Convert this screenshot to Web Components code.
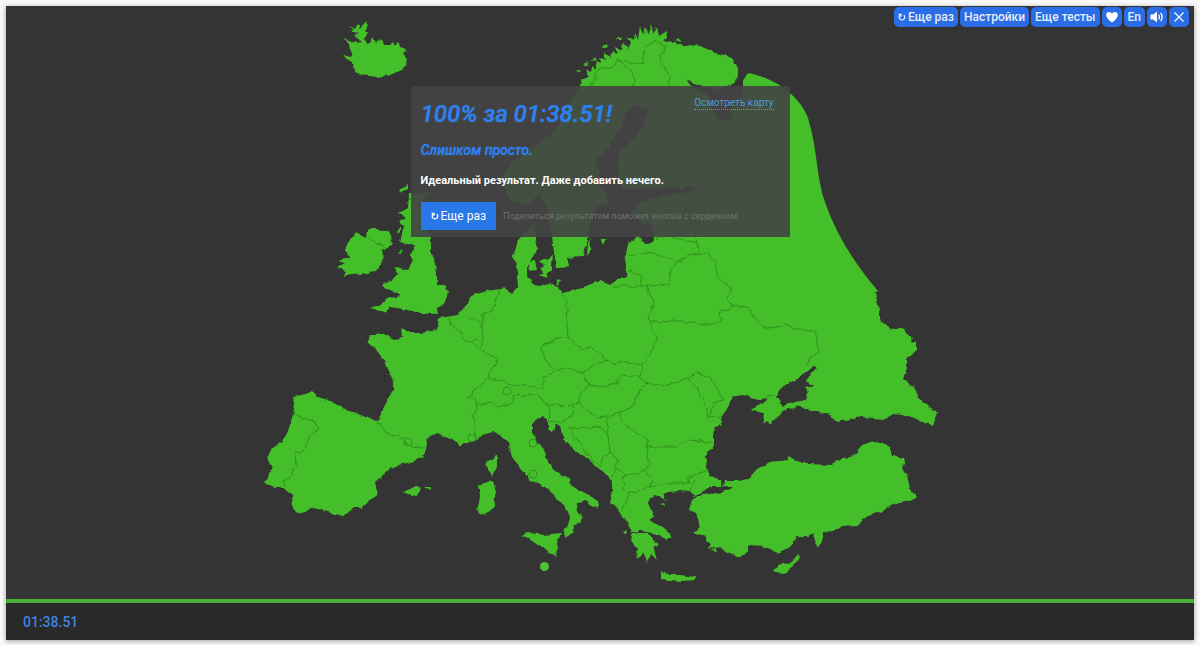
<!DOCTYPE html>
<html lang="ru">
<head>
<meta charset="utf-8">
<title>Карта Европы</title>
<style>
    body {
        margin: 0;
        background: #fafafa;
        font-family: Roboto, "Liberation Sans", sans-serif;
    }
</style>
</head>
<body>
<quiz-app>
    <quiz-toolbar slot="toolbar"></quiz-toolbar>
    <europe-map slot="map"></europe-map>
    <result-card slot="result" score="100%" time="01:38.51">
        <span slot="verdict">Слишком просто.</span>
        <span slot="comment">Идеальный результат. Даже добавить нечего.</span>
        <span slot="hint">Поделиться результатом поможет кнопка с сердечком</span>
    </result-card>
    <quiz-timer slot="status">01:38.51</quiz-timer>
</quiz-app>

<script>
class QuizApp extends HTMLElement {
    constructor() {
        super();
        this.attachShadow({ mode: "open" });
        this.shadowRoot.innerHTML = `
<style>
    :host {
        display: flex;
        box-sizing: border-box;
        min-height: 100vh;
        padding: 6px 6px 5px;
    }

    .frame {
        flex: 1;
        display: flex;
        flex-direction: column;
        background: #343434;
        box-shadow: 0 1px 5px rgba(0, 0, 0, 0.4);
    }

    main {
        flex: 1;
        display: grid;
        grid-template: minmax(0, 1fr) / minmax(0, 1fr);
    }

    slot[name="map"]::slotted(*),
    slot[name="toolbar"]::slotted(*),
    slot[name="result"]::slotted(*) {
        grid-area: 1 / 1;
    }

    slot[name="toolbar"]::slotted(*) {
        place-self: start end;
        margin: 1px 5px;
        z-index: 1;
    }

    slot[name="result"]::slotted(*) {
        place-self: start center;
        margin-top: 80px;
    }

    .progress {
        height: 4px;
        background: #4caf35;
    }

    footer {
        display: flex;
        align-items: center;
        height: 37px;
        padding: 0 17px;
        background: #292929;
    }
</style>
<div class="frame">
    <main>
        <slot name="map"></slot>
        <slot name="toolbar"></slot>
        <slot name="result"></slot>
    </main>
    <div class="progress"></div>
    <footer><slot name="status"></slot></footer>
</div>`;
    }
}

class QuizToolbar extends HTMLElement {
    constructor() {
        super();
        this.attachShadow({ mode: "open" });
        this.shadowRoot.innerHTML = `
<style>
    :host {
        display: flex;
        gap: 2px;
    }

    button {
        display: flex;
        align-items: center;
        justify-content: center;
        gap: 2px;
        height: 20px;
        min-width: 20px;
        padding: 0 4px;
        border: 0;
        border-radius: 5px;
        background: #2a6de6;
        color: #e6eefc;
        font: 500 12px Roboto, "Liberation Sans", sans-serif;
        cursor: pointer;
    }

    button.icon {
        padding: 0 3px;
    }

    svg {
        display: block;
        width: 14px;
        height: 14px;
    }

    svg.reload {
        width: 8px;
        height: 8px;
    }
</style>
<button type="button"><svg class="reload" viewBox="0 0 9 9" fill="none" stroke="#e6eefc" stroke-width="1.500"><path d="M2.600 2.200A3.100 3.100 0 1 0 6.600 2.400"/><path d="M0.600 1.600H3.300V4.200"/></svg>Еще раз</button>
<button type="button">Настройки</button>
<button type="button">Еще тесты</button>
<button type="button" class="icon" aria-label="Нравится"><svg viewBox="0 0 14 14" fill="#fff"><path d="M7 12.600C3 9.600 1.200 7.600 1.200 5.100A3 3 0 0 1 4.200 2C5.500 2 6.500 2.700 7 3.800C7.500 2.700 8.500 2 9.800 2A3 3 0 0 1 12.800 5.100C12.800 7.600 11 9.600 7 12.600Z"/></svg></button>
<button type="button">En</button>
<button type="button" class="icon" aria-label="Звук"><svg viewBox="0 0 14 14"><path d="M0.500 4.600H3.200L7 1.600V12.400L3.200 9.400H0.500Z" fill="#fff"/><path d="M8.600 4.600Q10.400 7 8.600 9.400M10.600 2.800Q13.800 7 10.600 11.200" fill="none" stroke="#fff" stroke-width="1.300"/></svg></button>
<button type="button" class="icon" aria-label="Закрыть"><svg viewBox="0 0 14 14"><path d="M2.500 2.500L11.500 11.500M11.500 2.500L2.500 11.500" stroke="#fff" stroke-width="1.200"/></svg></button>`;
    }
}

class ResultCard extends HTMLElement {
    constructor() {
        super();
        this.attachShadow({ mode: "open" });
        this.shadowRoot.innerHTML = `
<style>
    :host {
        display: block;
        box-sizing: border-box;
        width: 379px;
        max-width: 100%;
        padding: 10px 16px 7px 10px;
        background: rgba(68, 68, 68, 0.9);
        color: #fff;
    }

    header {
        display: flex;
        justify-content: space-between;
        align-items: flex-start;
    }

    h1, h2, p {
        margin: 0;
    }

    h1 {
        color: #2f80ed;
        font-size: 24px;
        font-style: italic;
        font-weight: 500;
        line-height: 36px;
        text-shadow: 0 0 1px;
    }

    h2 {
        margin-top: 10px;
        color: #2f80ed;
        font-size: 14px;
        font-style: italic;
        font-weight: 500;
        line-height: 16px;
        text-shadow: 0 0 1px;
    }

    p {
        margin-top: 15px;
        font-size: 11px;
        font-weight: bold;
        line-height: 16px;
    }

    a {
        margin-top: 1px;
        border-bottom: 1px dotted #4b98dc;
        color: #4b98dc;
        font-size: 10px;
        line-height: 12px;
        text-decoration: none;
    }

    .actions {
        display: flex;
        align-items: center;
        gap: 7px;
        margin-top: 13px;
    }

    button {
        display: flex;
        align-items: center;
        gap: 2px;
        height: 28px;
        padding: 0 10px;
        border: 0;
        background: #2878e8;
        color: #fff;
        font: 12px Roboto, "Liberation Sans", sans-serif;
        cursor: pointer;
    }

    svg {
        width: 8px;
        height: 8px;
    }

    small {
        color: #6e716d;
        font-size: 9px;
    }
</style>
<header>
    <h1></h1>
    <a href="#map">Осмотреть карту</a>
</header>
<h2><slot name="verdict"></slot></h2>
<p><slot name="comment"></slot></p>
<div class="actions">
    <button type="button"><svg viewBox="0 0 9 9" fill="none" stroke="#fff" stroke-width="1.500"><path d="M2.600 2.200A3.100 3.100 0 1 0 6.600 2.400"/><path d="M0.600 1.600H3.300V4.200"/></svg>Еще раз</button>
    <small><slot name="hint"></slot></small>
</div>`;
    }

    connectedCallback() {
        this.shadowRoot.querySelector("h1").textContent =
            this.getAttribute("score") + " за " + this.getAttribute("time") + "!";
    }
}

class QuizTimer extends HTMLElement {
    constructor() {
        super();
        this.attachShadow({ mode: "open" });
        this.shadowRoot.innerHTML = `
<style>
    :host {
        display: block;
        color: #3f83e0;
        font-size: 14px;
        font-weight: 500;
        line-height: 20px;
    }
</style>
<time><slot></slot></time>`;
    }
}

class EuropeMap extends HTMLElement {
    constructor() {
        super();
        this.attachShadow({ mode: "open" });
        this.shadowRoot.innerHTML = `
<style>
    :host {
        display: block;
        min-height: 0;
    }

    svg {
        display: block;
        width: 100%;
        height: 100%;
    }

    filter {
        color-interpolation-filters: sRGB;
    }

    .land {
        fill: #44bf29;
    }

    .borders {
        fill: none;
        stroke: #2c861b;
        stroke-width: 0.8;
        stroke-linejoin: round;
    }
</style>
<svg viewBox="6 6 1188 593" role="img" aria-label="Европа">
    <defs>
        <!-- roughens coastlines and borders -->
        <filter id="rough" filterUnits="userSpaceOnUse" x="250" y="10" width="700" height="585">
            <feTurbulence type="fractalNoise" baseFrequency="0.13" numOctaves="2" seed="7"/>
            <feDisplacementMap in="SourceGraphic" scale="5" xChannelSelector="R" yChannelSelector="G"/>
        </filter>
        <filter id="rough-line" filterUnits="userSpaceOnUse" x="250" y="10" width="700" height="585">
            <feTurbulence type="fractalNoise" baseFrequency="0.12" numOctaves="2" seed="3"/>
            <feDisplacementMap in="SourceGraphic" scale="6" xChannelSelector="R" yChannelSelector="G"/>
        </filter>
    </defs>
    <g class="land" filter="url(#rough)">
        <!-- mainland -->
        <path d="M580 87L583 78 588 78 586 70 591 74 592 66 597 70 595 62 602 64 599 57 606 60 604 52 610 57 612 51 617 54 615 47 621 50 622 43 628 48 631 43 627 36 634 41 635 34 638 40 640 26 643 35 646 26 647 36 652 24 653 35 657 26 659 36 667 31 668 37 663 41
        675 42 678 45 685 46 697 45 707 49 715 53 727 56 733 59 738 68 738 75 735 82 728 87 715 88 703 86 694 84 686 80 692 87 702 92 710 99 713 112 720 121 733 119 730 111 737 102 742 90 742 82 748 73
        760 76 773 83 785 94 795 107 802 120 806 135 810 155 815 180 821 205 833 232 848 260 860 276 875 293 877 300 879 310 881 323 887 325 890 330 895 328 900 328 907 333 913 338 912 342 917 343 917 350 912 353 907 360 907 368 903 379 908 383 915 387 918 397 927 405 937 412 933 425 925 423 917 420 903 415 893 414 885 419 873 418 863 417 850 419 838 422 830 415 818 412 810 412 803 406 795 406 795 402 806 400 808 393 806 388 813 386 809 383 805 381 810 375 817 368 813 367 803 375 795 380 785 385 780 392 776 397
        783 407 790 403 797 402 797 406 790 409 783 411 777 417 771 423 764 422 763 413 752 410 762 403 767 399 760 400 750 398 743 395 738 396 732 397 728 407 723 413 722 422 717 427 713 432 713 448 707 453 707 460 706 467 709 475 720 480 722 486 713 486 705 488 702 493 692 498 695 494 689 492 680 491 668 492 662 494 667 500 655 495 650 497 648 503 651 510 654 517 650 521 662 527 667 530 672 536 665 540 661 535 653 533 640 531 632 532 628 523 620 513 617 507 609 502 612 492 612 480
        607 475 597 467 588 460 577 452 567 443 562 435 560 425 555 423 553 432 548 430 548 418 542 416 533 422 533 432 538 443 545 452 548 462 555 472 563 477 573 478 569 483 583 492 597 500 598 509 593 507 585 500 578 503 576 512 583 517 580 523 575 525 572 533 564 537 563 532 568 525 570 517 566 507 560 502 553 495 545 488 537 483 528 479 522 470 512 457 508 443 503 437 493 431 485 433 477 440 467 443 460 446 448 438 437 434 428 438 426 448 423 458 410 462 393 467 383 475 375 482 378 495 372 498 362 508 352 508 343 516 328 512 315 508 298 513 293 507 292 495 285 488 275 488 265 483 272 468 267 458 272 448 282 442 288 430 292 417 295 408 293 397 312 392 318 397 333 402 347 410 363 416 377 421 385 405 393 390 393 380 388 370
        385 360 377 350 368 342 370 335 385 335 392 339 403 338 402 328 410 333 420 333 437 330 439 318 458 315 467 303 473 295 487 291 500 289 503 287 512 293 518 287 517 272 514 255 518 240 530 228 537 222 535 240 537 248 533 258 527 265 527 273 532 283 540 287 550 283 558 287 563 293 583 288 600 280 610 285 617 280 626 277 627 265 625 253 628 242 638 236 645 244 654 240 652 225 640 222 633 212 640 203 660 197 695 191 690 187 650 188 622 190 618 175 618 155 632 140 645 122 648 108 637 105 625 112 622 125 610 145 597 160 600 185 610 200 597 207 590 220 587 240 583 257 567 258 568 267 557 268 553 245 551 225 546 205 540 195 522 206 510 200 503 188 505 172 511 162 527 152 540 142 557 128 570 102Z"/>
        <!-- turkey -->
        <path d="M693 499L703 495 723 492 733 487 723 486 724 481 737 481 748 479 758 468 770 462 787 460 788 456 797 461 807 464 830 465 842 458 852 457 862 445 875 441 883 443 890 448 892 456 905 458 903 467 907 475 910 488 917 497 912 500 893 505 880 512 870 515 857 525 842 526 833 531 823 532 823 538 818 548 814 540 815 533 808 537 797 537 790 547 777 553 763 546 748 545 748 552 738 557 728 552 722 547 708 549 711 545 705 537 693 532 700 528 698 520 696 513 690 510Z"/>
        <!-- great britain -->
        <path d="M409 194L430 192 420 205 436 208 425 225 431 237 431 255 435 258 437 273 437 285 445 285 448 292 445 302 437 308 438 314 420 313 403 309 390 307 384 312 375 310 370 308 380 305 390 298 400 296 395 292 385 288 382 284 392 282 398 273 393 267 400 268 408 270 412 263 411 255 415 245 407 244 400 242 402 235 405 227 399 221 406 218 399 213 408 208Z"/>
        <!-- ireland -->
        <path d="M373 227L382 230 391 233 392 245 383 250 382 263 375 272 360 274 343 276 347 271 337 268 344 264 339 261 352 257 345 250 348 243 355 233 367 238 368 230Z"/>
        <!-- iceland -->
        <path d="M342 55L350 57 352 52 350 44 343 38 353 41 361 43 354 36 360 34 349 31 354 30 348 25 355 28 359 22 361 29 365 22 368 25 364 30 369 33 363 40 368 43 373 37 376 43 382 39 384 45 390 45 393 42 395 46 399 42 400 48 407 50 403 53 406 58 405 67 402 70 390 75 377 77 360 75 353 67 352 62 345 58Z"/>
        <!-- peloponnese -->
        <path d="M633 533L647 533 653 540 660 544 653 547 657 560 651 554 648 563 643 552 638 559 637 550 631 540Z"/>
        <!-- islands -->
        <path d="M523 535L528 532 543 535 561 533 557 543 555 556 548 552 535 543Z"/>
        <path d="M478 485L493 480 496 492 493 510 482 515 477 510 480 497Z"/>
        <path d="M486 462L494 458 497 453 497 467 492 477 487 470Z"/>
        <path d="M661 571L666 575 680 575 696 577 695 580 680 581 661 579Z"/>
        <path d="M773 570L783 564 792 562 799 554 801 556 793 566 782 574 775 573Z"/>
        <path d="M403 492L415 486 421 489 417 496 408 494ZM424 486L430 486 432 491Z"/>
        <path d="M540 261L546 259 552 255 551 264 552 271 545 273 541 269 545 265ZM527 262L535 261 537 270 529 271ZM539 274L548 272 547 279ZM555 280L560 281 558 286Z"/>
        <path d="M399 190L404 187 408 184 408 188 403 191 401 194ZM397 232L401 226 402 229 398 234ZM398 253L402 250 401 254Z"/>
        <path d="M588 243L591 238 590 252 587 256ZM601 238L606 238 603 246Z"/>
        <path d="M576 72L580 70 581 73ZM584 64L589 62 588 66ZM591 61L595 57 596 60ZM602 47L607 44 608 48ZM616 39L621 37 622 41ZM675 40L680 38 681 42ZM623 533L627 531 626 536ZM660 503L664 502 665 506Z"/>
        <path d="M710 551L716 549 717 552Z"/>
    </g>
    <!-- the eastern cut of the map is a clean arc -->
    <path class="land" d="M748 73C775 78 800 96 808 118C818 150 816 180 826 205C838 238 858 268 878 291L868 296 830 270 780 120Z"/>
    <g class="borders" filter="url(#rough-line)">
        <!-- iberia -->
        <path d="M292 413L302 417 315 422 318 430 310 435 303 452 295 453 296 465 292 470 292 477 284 482 283 487"/>
        <path d="M377 421L385 432 397 437 413 447 426 448"/>
        <!-- ireland -->
        <path d="M370 237L376 243 383 244 386 249"/>
        <!-- france and the low countries -->
        <path d="M449 318L450 325 462 333 463 340 472 343 480 350 498 360 489 373 488 380 472 392 468 398 475 398 478 405 473 417 476 430 473 437"/>
        <path d="M500 288L495 307 483 315 482 327 483 340 481 348M467 317L478 320 482 327M472 343L477 337 481 340"/>
        <!-- alps -->
        <path d="M488 380L500 380 512 385 525 386 543 388 543 377 555 372M478 405L492 403 498 407 512 403 513 395 535 394 547 403 565 406 578 402 587 383 584 373"/>
        <!-- central europe -->
        <path d="M563 293L567 303 566 310 568 337 558 338 540 347 545 360 555 372 567 368 584 373 597 362 606 361 593 348 583 350 568 337"/>
        <path d="M606 361L613 363 627 363 643 365 640 377 622 375 617 383 597 387 587 383"/>
        <path d="M640 377L648 383 638 393 632 407 620 413 600 418 583 408 578 402"/>
        <path d="M647 286L653 302 648 317 657 340 643 365M613 286L647 286M628 272L640 275 641 286"/>
        <!-- baltics and belarus -->
        <path d="M628 255L640 253 658 254 676 262 672 270 668 285 647 286M676 262L690 255 707 254 715 262 717 275 731 290 727 300 733 306M654 240L668 235 685 240 697 243 700 253M697 243L690 225 692 195"/>
        <!-- ukraine -->
        <path d="M650 322L680 321 705 325 722 320 720 312 733 306 748 308 755 318 765 327 780 328 787 324 795 329 815 330 817 340 819 352 810 358 806 366"/>
        <path d="M648 383L667 386 687 377 697 373 710 377 717 387 724 400 715 403 708 418 703 400 695 385 687 377M708 418L722 417"/>
        <!-- balkans -->
        <path d="M547 403L550 413 549 420 557 422 572 417 573 407 578 402"/>
        <path d="M600 418L607 418 608 437 610 452 602 458 600 467 588 455 577 440 570 428 585 427 603 428 608 437"/>
        <path d="M620 413L625 423 637 433 648 440 648 447 677 447 690 440 713 443M648 447L647 457 650 463 643 472 625 475 623 488 630 493 650 487 652 478 643 472"/>
        <path d="M610 452L618 460 615 467 612 478M615 467L625 475M630 493L625 503 620 512M650 487L673 483 690 483 689 477 708 470M695 480L690 492M767 398L775 397"/>
        <!-- scandinavia -->
        <path d="M666 45L653 41 645 47 642 62 630 64 617 60 632 72 635 86 637 105M617 60L613 68 600 68 590 86 575 110 560 145 550 165 547 200M666 45L660 60 670 75 668 86 680 120 685 150 675 185"/>
    </g>
    <path d="M722 480V487" stroke="#343434"/>
    <g class="borders">
        <circle cx="408" cy="442" r="4"/>
        <circle cx="472" cy="438" r="4"/>
        <circle cx="507" cy="391" r="4"/>
        <circle cx="533" cy="443" r="4"/>
        <circle cx="533" cy="474" r="4"/>
    </g>
    <circle cx="544.5" cy="566.5" r="4.5" fill="#4fbf3a"/>
</svg>`;
    }
}

customElements.define("quiz-app", QuizApp);
customElements.define("quiz-toolbar", QuizToolbar);
customElements.define("result-card", ResultCard);
customElements.define("quiz-timer", QuizTimer);
customElements.define("europe-map", EuropeMap);
</script>
</body>
</html>
